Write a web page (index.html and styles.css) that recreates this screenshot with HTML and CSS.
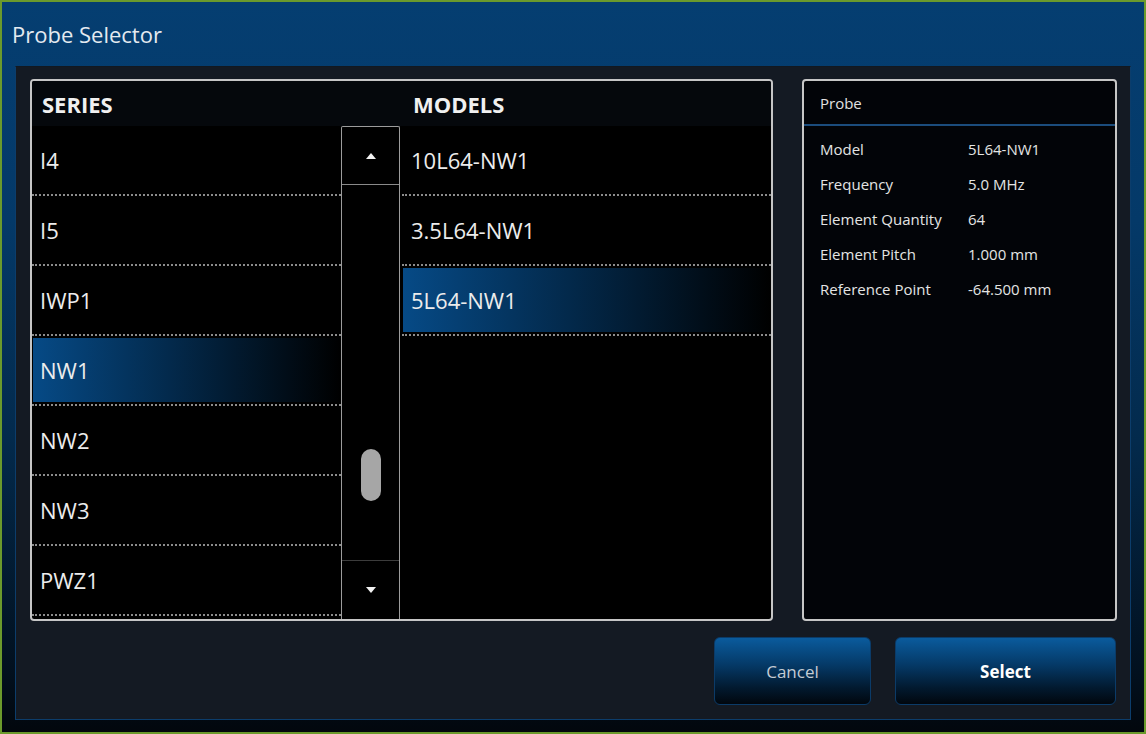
FILE: index.html
```html
<!DOCTYPE html>
<html>

<head>
  <meta charset="utf-8">
  <meta name="viewport" content="width=device-width">
  <title>Probe Selector</title>
  <link rel="stylesheet" href="styles.css">
</head>

<body>

  <div class="window">
    <div class="title">Probe Selector</div>

    <div class="panel">
      <div class="main">

        <!-- Series / Models list -->
        <div class="listbox">
          <div class="col series">
            <div class="col-head">SERIES</div>
            <div class="row">I4</div>
            <div class="row">I5</div>
            <div class="row">IWP1</div>
            <div class="row selected">NW1</div>
            <div class="row">NW2</div>
            <div class="row">NW3</div>
            <div class="row">PWZ1</div>
          </div>

          <div class="col scroll-col">
            <div class="col-head"></div>
            <div class="scrollbar">
              <div class="scroll-btn up">
                <svg width="10" height="6" viewBox="0 0 10 6"><polygon points="5,0 10,6 0,6" fill="#f2f2f2"/></svg>
              </div>
              <div class="scroll-track">
                <div class="scroll-thumb"></div>
              </div>
              <div class="scroll-btn down">
                <svg width="10" height="6" viewBox="0 0 10 6"><polygon points="0,0 10,0 5,6" fill="#f2f2f2"/></svg>
              </div>
            </div>
          </div>

          <div class="col models">
            <div class="col-head">MODELS</div>
            <div class="row">10L64-NW1</div>
            <div class="row">3.5L64-NW1</div>
            <div class="row selected">5L64-NW1</div>
          </div>
        </div>

        <!-- Probe details -->
        <div class="probe">
          <div class="probe-head">Probe</div>
          <div class="probe-body">
            <div class="prop"><span class="prop-label">Model</span><span>5L64-NW1</span></div>
            <div class="prop"><span class="prop-label">Frequency</span><span>5.0 MHz</span></div>
            <div class="prop"><span class="prop-label">Element Quantity</span><span>64</span></div>
            <div class="prop"><span class="prop-label">Element Pitch</span><span>1.000 mm</span></div>
            <div class="prop"><span class="prop-label">Reference Point</span><span>-64.500 mm</span></div>
          </div>
        </div>

      </div>

      <div class="actions">
        <button class="btn cancel">Cancel</button>
        <button class="btn select">Select</button>
      </div>
    </div>
  </div>

</body>

</html>
```

FILE: styles.css
```css
html,
body {
  margin: 0;
  height: 100%;
}

body {
  font-family: 'Open Sans', 'Noto Sans', sans-serif;
  color: #e8e8e8;
  background: #000;
}

.window {
  box-sizing: border-box;
  height: 734px;
  border: 2px solid #6b9a2c;
  background: linear-gradient(#053e71 0%, #043968 30%, #032a4c 60%, #02101e 92%, #02070d 100%);
  display: flex;
  flex-direction: column;
}

.title {
  height: 64px;
  padding-left: 10px;
  display: flex;
  align-items: center;
  font-size: 22px;
  color: #e4eaf0;
}

.panel {
  flex: 1;
  margin: 0 13px 12px 13px;
  padding: 12px 13px 14px 14px;
  background: #141a23;
  border: 1px solid #0c3d6b;
  border-top-color: #121820;
  display: flex;
  flex-direction: column;
}

.main {
  display: flex;
  gap: 29px;
  height: 542px;
}

/* list box */

.listbox {
  width: 743px;
  flex-shrink: 0;
  box-sizing: border-box;
  border: 2px solid #c6c6c6;
  border-radius: 4px;
  background: #000;
  display: flex;
  overflow: hidden;
}

.col {
  display: flex;
  flex-direction: column;
}

.series {
  width: 309px;
}

.models {
  flex: 1;
}

.col-head {
  height: 45px;
  flex-shrink: 0;
  background: #05080c;
  display: flex;
  align-items: center;
  font-size: 22px;
  font-weight: 700;
  color: #f0f0f0;
}

.series .col-head {
  padding-left: 10px;
}

.models .col-head {
  padding-left: 13px;
}

.row {
  height: 68px;
  flex-shrink: 0;
  display: flex;
  align-items: center;
  font-size: 22px;
  color: #ececec;
  border-bottom: 2px dotted #8c8c8c;
}

.series .row {
  padding-left: 8px;
}

.models .row {
  margin-left: 2px;
  padding-left: 9px;
}

.row.selected {
  background: linear-gradient(to right, #064a86 0%, #03294b 45%, #000 100%) no-repeat;
  background-size: calc(100% - 1px) 64px;
  background-position: 1px 2px;
}

/* scrollbar */

.scroll-col {
  width: 59px;
}

.scrollbar {
  flex: 1;
  box-sizing: border-box;
  border: 1px solid #9c9c9c;
  border-bottom: none;
  border-radius: 2px 2px 0 0;
  display: flex;
  flex-direction: column;
  background: #000;
}

.scroll-btn {
  display: flex;
  align-items: center;
  justify-content: center;
}

.scroll-btn.up {
  height: 57px;
  border-bottom: 1px solid #8a8a8a;
}

.scroll-btn.down {
  height: 58px;
  border-top: 1px solid #3c3c3c;
}

.scroll-btn svg {
  display: block;
}

.scroll-track {
  flex: 1;
  display: flex;
  flex-direction: column;
  align-items: center;
}

.scroll-thumb {
  width: 20px;
  height: 52px;
  margin-top: 264px;
  border-radius: 10px;
  background: #a6a6a6;
}

/* probe details */

.probe {
  flex: 1;
  box-sizing: border-box;
  border: 2px solid #c6c6c6;
  border-radius: 4px;
  background: #020408;
  display: flex;
  flex-direction: column;
}

.probe-head {
  height: 43px;
  padding-left: 16px;
  display: flex;
  align-items: center;
  font-size: 15px;
  color: #e0e0e0;
  border-bottom: 2px solid #1b4c7c;
}

.probe-body {
  padding-top: 5px;
}

.prop {
  height: 35px;
  padding-left: 16px;
  display: flex;
  align-items: center;
  font-size: 15px;
  color: #e4e4e4;
}

.prop-label {
  width: 148px;
}

/* buttons */

.actions {
  margin-top: 16px;
  display: flex;
  justify-content: flex-end;
  gap: 24px;
}

.btn {
  height: 68px;
  border: 1px solid #0b3b68;
  border-radius: 6px;
  background: linear-gradient(#0a5b9d 0%, #053a68 40%, #021a30 75%, #01070e 100%);
  font-family: inherit;
  font-size: 17px;
  cursor: pointer;
}

.btn.cancel {
  width: 157px;
  color: #c4ccd4;
}

.btn.select {
  width: 221px;
  margin-right: 1px;
  color: #ffffff;
  font-weight: 700;
}
```
